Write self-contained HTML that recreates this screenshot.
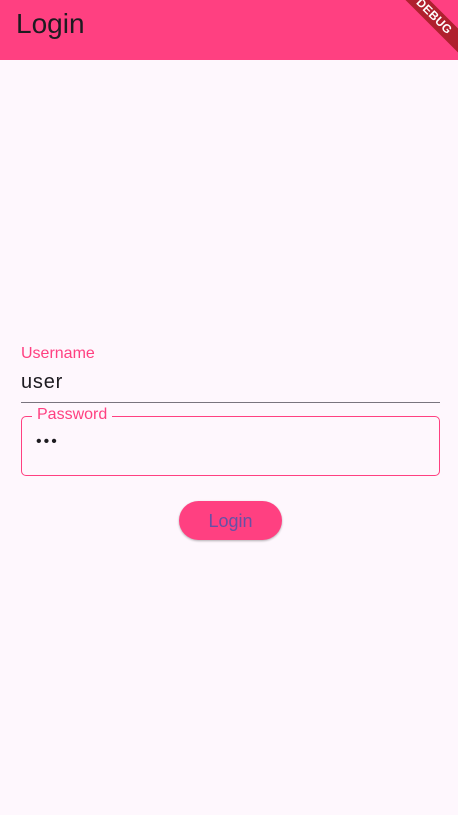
<!DOCTYPE html>
<html><head><style>
body{margin:0;width:458px;height:815px;background:#fef7fd;font-family:"Liberation Sans",sans-serif;position:relative;overflow:hidden}
.bar{position:absolute;left:0;top:0;width:458px;height:60px;background:#ff4081}
.bar h1{margin:0;position:absolute;left:16px;top:8px;font-size:28px;font-weight:normal;color:#1d1b20}
.ribbon{position:absolute;top:8px;right:-36px;width:120px;height:17px;background:#b0202e;transform:rotate(45deg);color:#fff;font-size:12px;font-weight:bold;text-align:center;line-height:17px;letter-spacing:0.3px}
.ul{position:absolute;left:21px;top:346px;width:419px}
.lab{font-size:16px;color:#ff4081;margin-top:-1px}
.val{position:absolute;top:25px;left:0;font-size:20px;color:#1d1b20;letter-spacing:0.8px}
.line{position:absolute;top:56px;left:0;width:419px;height:1px;background:#79747e}
.out{position:absolute;left:21px;top:416px;width:417px;height:58px;border:1px solid #ff4081;border-radius:5px}
.out .l{position:absolute;left:10px;top:-11px;background:#fef7fd;padding:0 5px;font-size:16px;color:#ff4081}
.out .d{position:absolute;left:14px;top:16px;font-size:16px;color:#1d1b20;letter-spacing:2px}
.btn{position:absolute;left:179px;top:501px;width:103px;height:39px;border-radius:20px;background:#ff4081;box-shadow:0 1px 2px rgba(0,0,0,.3);color:#6750a4;font-size:18px;text-align:center;line-height:40px}
</style></head><body>
<div class="bar"><h1>Login</h1><div class="ribbon">DEBUG</div></div>
<div class="ul"><div class="lab">Username</div><div class="val">user</div><div class="line"></div></div>
<div class="out"><span class="l">Password</span><div class="d">•••</div></div>
<div class="btn">Login</div>
</body></html>
